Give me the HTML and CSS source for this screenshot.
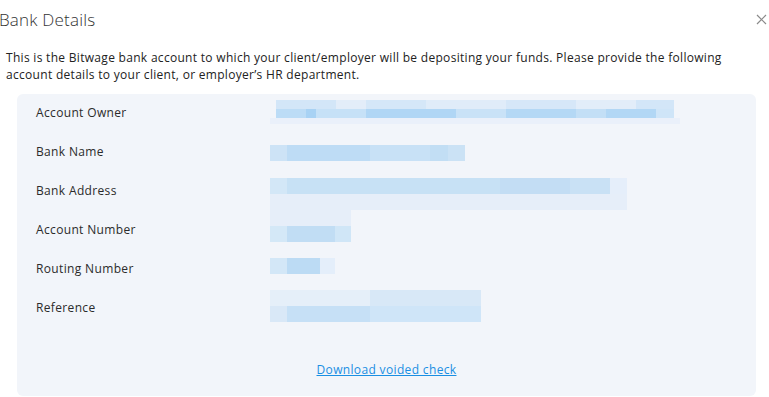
FILE: index.html
```html
<!DOCTYPE html>
<html lang="en">
<head>
    <meta charset="UTF-8">
    <meta name="viewport" content="width=device-width, initial-scale=1.0">
    <title>Bank Details</title>
    <link rel="stylesheet" href="styles.css">
</head>
<body>
    <div class="modal">
        <div class="modal-header">
            <h2 class="modal-title">Bank Details</h2>
            <button class="close" aria-label="Close">
                <svg width="11" height="11" viewBox="0 0 11 11">
                    <path d="M1 1 L10 10 M10 1 L1 10" stroke="#8a8a8a" stroke-width="1.2" fill="none"/>
                </svg>
            </button>
        </div>

        <p class="intro">This is the Bitwage bank account to which your client/employer will be depositing your funds. Please provide the following account details to your client, or employer’s HR department.</p>

        <div class="details">
            <div class="row">
                <span class="label">Account Owner</span>
                <div class="value v-owner">
                    <div class="blur b-owner-1"></div>
                    <div class="blur b-owner-2"></div>
                    <div class="blur b-owner-3"></div>
                </div>
            </div>
            <div class="row">
                <span class="label">Bank Name</span>
                <div class="value v-bank">
                    <div class="blur b-bank"></div>
                </div>
            </div>
            <div class="row">
                <span class="label">Bank Address</span>
                <div class="value v-addr">
                    <div class="blur b-addr-1"></div>
                    <div class="blur b-addr-2"></div>
                </div>
            </div>
            <div class="row">
                <span class="label">Account Number</span>
                <div class="value v-acct">
                    <div class="blur b-acct-1"></div>
                    <div class="blur b-acct-2"></div>
                </div>
            </div>
            <div class="row">
                <span class="label">Routing Number</span>
                <div class="value v-routing">
                    <div class="blur b-routing"></div>
                </div>
            </div>
            <div class="row">
                <span class="label">Reference</span>
                <div class="value v-ref">
                    <div class="blur b-ref-1"></div>
                    <div class="blur b-ref-2"></div>
                </div>
            </div>

            <div class="download">
                <a href="#">Download voided check</a>
            </div>
        </div>
    </div>
</body>
</html>
```

FILE: styles.css
```css
* {
    margin: 0;
    padding: 0;
    box-sizing: border-box;
}

body {
    background: #fff;
    font-family: 'Open Sans', sans-serif;
    color: #2b2b2b;
    width: 769px;
    height: 397px;
    overflow: hidden;
}

.modal {
    display: flex;
    flex-direction: column;
}

.modal-header {
    display: flex;
    justify-content: space-between;
    align-items: center;
    height: 38px;
    padding-right: 1px;
}

.modal-title {
    font-size: 17px;
    font-weight: 300;
    color: #333;
    margin-left: -1px;
    letter-spacing: 0.2px;
}

.close {
    background: none;
    border: none;
    width: 14px;
    height: 14px;
    display: flex;
    align-items: center;
    justify-content: center;
}

.intro {
    font-size: 12px;
    line-height: 17px;
    padding: 11px 40px 0 6px;
    color: #222;
    letter-spacing: 0.3px;
}

.details {
    margin: 11px 13px 0 17px;
    background: #f2f5fa;
    border-radius: 6px;
    padding: 0 0 0 19px;
    height: 302px;
}

.row {
    display: flex;
    align-items: flex-start;
    height: 39px;
}

.label {
    width: 234px;
    padding-top: 10px;
    font-size: 12px;
    line-height: 17px;
    letter-spacing: 0.35px;
    color: #2b2b2b;
}

.value {
    display: flex;
    flex-direction: column;
}

.v-owner { margin-top: 6px; }
.v-bank { margin-top: 12px; }
.v-addr { margin-top: 6px; }
.v-acct { margin-top: -1px; }
.v-routing { margin-top: 8px; }
.v-ref { margin-top: 1px; }

/* pixelated, blurred values */
.blur {
    height: 16px;
    filter: blur(0.6px);
}

.b-owner-1 {
    width: 398px;
    height: 9px;
    margin-left: 6px;
    background: linear-gradient(90deg, #d3e6f8 0 60px, #e3edf9 60px 90px, #d5e7f8 90px 150px, #e0ecf9 150px 230px, #d6e7f8 230px 300px, #e2edf9 300px 360px, #d3e6f8 360px);
}

.b-owner-2 {
    width: 398px;
    height: 9px;
    margin-left: 6px;
    background: linear-gradient(90deg, #bcdcf6 0 30px, #a8d2f4 30px 40px, #c6e1f7 40px 90px, #b0d6f5 90px 180px, #c9e2f7 180px 230px, #b4d8f5 230px 300px, #c3dff6 300px 330px, #b2d7f5 330px 380px, #cfe5f8 380px);
}

.b-owner-3 {
    width: 410px;
    height: 6px;
    background: #eaf0fa;
}

.b-bank {
    width: 195px;
    background: linear-gradient(90deg, #cde3f6 0 17px, #bedcf5 17px 100px, #c8e1f6 100px 160px, #c2def4 160px 178px, #cbe2f5 178px);
}

.b-addr-1 {
    width: 357px;
    background: linear-gradient(90deg, #d3e7f7 0 17px, #c7e1f5 17px 230px, #c3ddf4 230px 300px, #c9e1f5 300px 340px, #e5eefa 340px);
}

.b-addr-2 {
    width: 357px;
    background: #e6eef9;
}

.b-acct-1 {
    width: 81px;
    background: #e6eef9;
}

.b-acct-2 {
    width: 81px;
    background: linear-gradient(90deg, #d4e8f7 0 17px, #c1ddf4 17px 65px, #d0e6f7 65px);
}

.b-routing {
    width: 65px;
    background: linear-gradient(90deg, #d3e7f7 0 17px, #bcdbf4 17px 50px, #e4eefa 50px);
}

.b-ref-1 {
    width: 211px;
    background: linear-gradient(90deg, #e5eff9 0 100px, #d8e8f7 100px);
}

.b-ref-2 {
    width: 211px;
    background: linear-gradient(90deg, #d9e8f7 0 17px, #c6e0f6 17px 100px, #cfe5f8 100px);
}

.download {
    display: flex;
    justify-content: center;
    padding: 33px 19px 0 0;
    line-height: 17px;
}

.download a {
    color: #1a8fe3;
    font-size: 12px;
    letter-spacing: 0.35px;
    text-decoration: underline;
}
```
